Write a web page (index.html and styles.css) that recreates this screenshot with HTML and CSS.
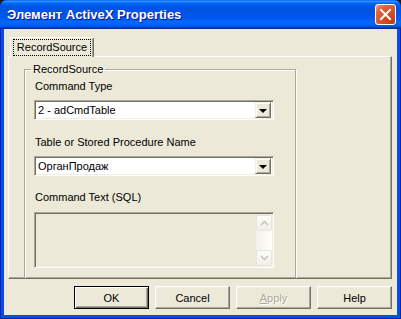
FILE: index.html
```html
<!DOCTYPE html>
<html lang="ru">
<head>
    <meta charset="UTF-8">
    <title>Элемент ActiveX Properties</title>
    <link rel="stylesheet" href="styles.css">
</head>
<body>

    <div class="window">
        <!-- Title bar -->
        <div class="titlebar">
            <span class="title">Элемент ActiveX Properties</span>
            <span class="close">
                <svg width="13" height="13" viewBox="0 0 13 13">
                    <path d="M2 2 L11 11 M11 2 L2 11" stroke="#fff" stroke-width="2" stroke-linecap="square"/>
                </svg>
            </span>
        </div>

        <div class="client">
            <!-- Tabs -->
            <div class="tabs">
                <div class="tab active"><span class="focus">RecordSource</span></div>
            </div>

            <div class="panel">
                <fieldset class="group">
                    <legend>RecordSource</legend>

                    <div class="field-label first">Command Type</div>
                    <div class="combo">
                        <span class="combo-text">2 - adCmdTable</span>
                        <span class="combo-btn"><span class="arrow-down"></span></span>
                    </div>

                    <div class="field-label">Table or Stored Procedure Name</div>
                    <div class="combo">
                        <span class="combo-text">ОрганПродаж</span>
                        <span class="combo-btn"><span class="arrow-down"></span></span>
                    </div>

                    <div class="field-label sql">Command Text (SQL)</div>
                    <div class="memo">
                        <div class="memo-body"></div>
                        <div class="scrollbar">
                            <span class="sb-btn">
                                <svg width="9" height="6" viewBox="0 0 9 6"><path d="M1 5 L4.5 1.5 L8 5" fill="none" stroke="#C8C6BA" stroke-width="1.6"/></svg>
                            </span>
                            <span class="sb-track"></span>
                            <span class="sb-btn">
                                <svg width="9" height="6" viewBox="0 0 9 6"><path d="M1 1 L4.5 4.5 L8 1" fill="none" stroke="#C8C6BA" stroke-width="1.6"/></svg>
                            </span>
                        </div>
                    </div>
                </fieldset>
            </div>

            <!-- Dialog buttons -->
            <div class="buttons">
                <span class="btn default">OK</span>
                <span class="btn">Cancel</span>
                <span class="btn disabled"><u>A</u>pply</span>
                <span class="btn">Help</span>
            </div>
        </div>
    </div>

</body>
</html>
```

FILE: styles.css
```css
/* Basic page styling */
* {
    box-sizing: border-box;
}

body {
    margin: 0;
    background-color: #1b1b1b;
    font-family: "Liberation Sans", Arial, sans-serif;
    font-size: 11px;
    color: #000;
}

.window {
    width: 401px;
    height: 319px;
    background-color: #0A4CE4;
    border-radius: 7px 7px 0 0;
    box-shadow: inset 1px 0 #0026B5, inset -1px 0 #0026B5, inset 0 -1px #0026B5;
    display: flex;
    flex-direction: column;
    overflow: hidden;
}

/* Title bar */
.titlebar {
    flex: none;
    height: 29px;
    display: flex;
    align-items: center;
    padding: 0 5px 0 7px;
    background: linear-gradient(to bottom, #0058EE 0%, #3593FF 4%, #288EFF 6%, #127DFF 8%, #036FFC 10%, #0262EE 14%, #0057E5 20%, #0054E3 24%, #0055EB 56%, #005BF5 66%, #026AFE 76%, #0062EF 86%, #0052D6 92%, #0040AB 94%, #003092 100%);
}

.title {
    flex: 1;
    color: #fff;
    font-weight: bold;
    font-size: 13px;
    text-shadow: 1px 1px #0F1089;
}

.close {
    width: 21px;
    height: 21px;
    border: 1px solid #fff;
    border-radius: 3px;
    display: flex;
    align-items: center;
    justify-content: center;
    background: radial-gradient(circle at 85% 85%, #C73A14 0%, #DA5228 50%, #E2663E 75%, #F0A084 100%);
}

/* Client area */
.client {
    flex: 1;
    margin: 0 4px 4px;
    background-color: #ECE9D8;
    padding: 8px 5px 0 4px;
}

.tabs {
    display: flex;
    padding-left: 2px;
    position: relative;
    z-index: 1;
}

.tab {
    width: 84px;
    height: 20px;
    margin-bottom: -1px;
    background-color: #ECE9D8;
    border-top: 1px solid #fff;
    border-left: 1px solid #fff;
    border-right: 1px solid #716F64;
    border-radius: 2px 2px 0 0;
    box-shadow: inset -1px 0 #ACA899;
    padding: 1px 2px 0 2px;
}

.focus {
    display: block;
    height: 17px;
    border: 1px dotted #000;
    line-height: 14px;
    text-align: center;
}

.panel {
    height: 223px;
    border: 1px solid;
    border-color: #fff #716F64 #716F64 #fff;
    box-shadow: inset -1px -1px #ACA899;
    overflow: hidden;
}

/* Etched group box */
.group {
    margin: 6px 0 0 15px;
    width: 272px;
    height: 240px;
    padding: 0 9px;
    border: 1px solid #ACA899;
    box-shadow: inset 1px 1px #fff, 1px 1px #fff;
}

.group legend {
    padding: 0 2px;
    margin-left: -3px;
    line-height: 13px;
}

.field-label {
    line-height: 13px;
    margin: 16px 0 7px 1px;
}

.field-label.first {
    margin-top: 4px;
}

.field-label.sql {
    margin: 15px 0 8px 1px;
}

/* Combo boxes */
.combo {
    width: 240px;
    height: 20px;
    display: flex;
    align-items: center;
    background-color: #fff;
    border: 1px solid;
    border-color: #ACA899 #fff #fff #ACA899;
    box-shadow: inset 1px 1px #716F64, inset -1px -1px #F1EFE2;
    padding: 2px;
}

.combo-text {
    flex: 1;
    padding-left: 1px;
}

.combo-btn {
    width: 16px;
    height: 16px;
    background-color: #ECE9D8;
    border: 1px solid;
    border-color: #F1EFE2 #716F64 #716F64 #F1EFE2;
    box-shadow: inset 1px 1px #fff, inset -1px -1px #ACA899;
    display: flex;
    align-items: center;
    justify-content: center;
}

.arrow-down {
    width: 0;
    height: 0;
    border-left: 4px solid transparent;
    border-right: 4px solid transparent;
    border-top: 4px solid #000;
    margin-top: 1px;
}

/* Disabled multi-line text */
.memo {
    width: 240px;
    height: 56px;
    display: flex;
    border: 1px solid;
    border-color: #ACA899 #fff #fff #ACA899;
    box-shadow: inset 1px 1px #716F64, inset -1px -1px #F1EFE2;
    padding: 2px 1px 1px 2px;
}

.memo-body {
    flex: 1;
}

.scrollbar {
    width: 16px;
    display: flex;
    flex-direction: column;
    background: linear-gradient(to right, #F3F1EC, #FEFEFB);
}

.sb-btn {
    height: 16px;
    border: 1px solid #E6E4DC;
    border-radius: 2px;
    background: linear-gradient(to bottom, #FDFDFB, #EFEEE7);
    display: flex;
    align-items: center;
    justify-content: center;
}

.sb-track {
    flex: 1;
}

/* Dialog buttons */
.buttons {
    display: flex;
    justify-content: flex-end;
    gap: 6px;
    margin-top: 7px;
}

.btn {
    width: 75px;
    height: 23px;
    display: flex;
    align-items: center;
    justify-content: center;
    background-color: #ECE9D8;
    border: 1px solid;
    border-color: #fff #716F64 #716F64 #fff;
    box-shadow: inset -1px -1px #ACA899, inset 1px 1px #F1EFE2;
}

.btn.default {
    border-color: #000;
    box-shadow: inset 1px 1px #fff, inset -1px -1px #716F64, inset -2px -2px #ACA899;
}

.btn.disabled {
    color: #ACA899;
    text-shadow: 1px 1px #fff;
}
```
